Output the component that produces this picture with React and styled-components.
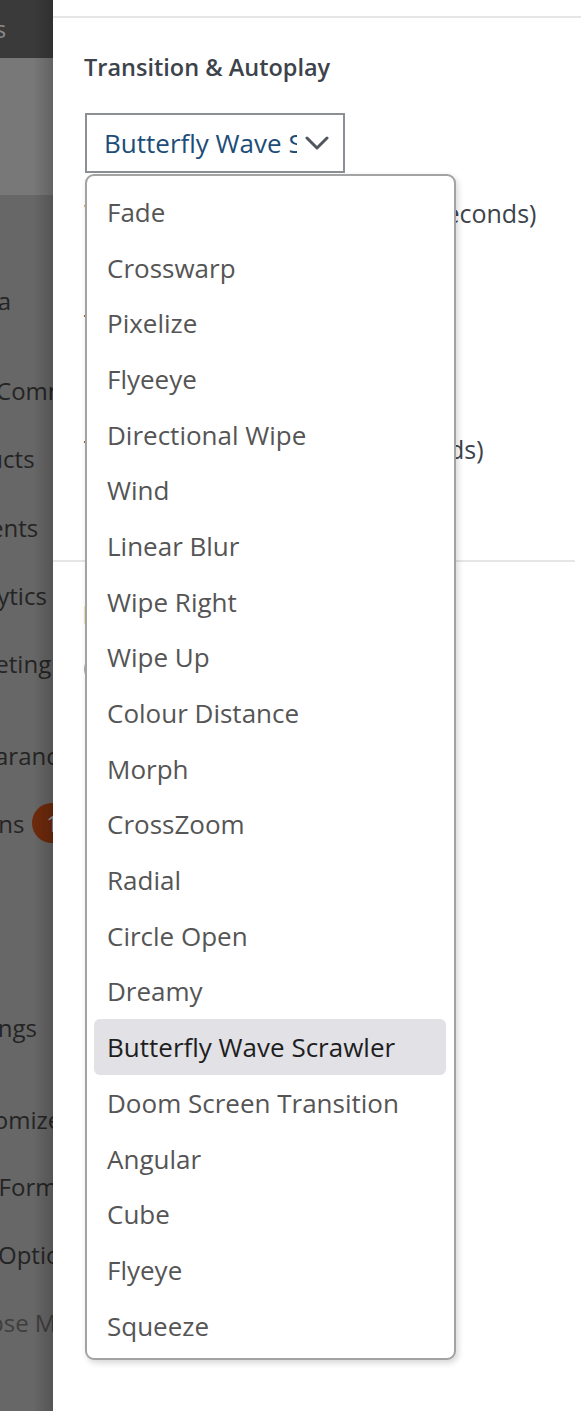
import React from 'react';
import styled, { createGlobalStyle } from 'styled-components';

const GlobalStyle = createGlobalStyle`
  html, body {
    margin: 0;
    padding: 0;
    background: #fff;
  }
  body {
    font-family: "Open Sans", "Noto Sans", sans-serif;
  }
`;

const Screen = styled.div`
  display: flex;
  width: 581px;
  height: 1411px;
  overflow: hidden;
`;

// dimmed admin menu on the left
const Sidebar = styled.aside`
  position: relative;
  flex: 0 0 53px;
  display: flex;
  flex-direction: column;
  background: #676767;
  overflow: hidden;
  &::after {
    content: '';
    position: absolute;
    top: 0;
    right: 0;
    bottom: 0;
    width: 20px;
    background: linear-gradient(to right, rgba(0, 0, 0, 0), rgba(0, 0, 0, 0.18));
  }
`;

const TopBar = styled.div`
  height: 58px;
  background: #3a3a3a;
  color: #8a8a8a;
  font-size: 24px;
  line-height: 58px;
  white-space: nowrap;
  margin-left: -${(p) => p.$shift}px;
`;

const CurrentBlock = styled.div`
  height: 137px;
  background: #787878;
`;

const MenuList = styled.nav`
  display: flex;
  flex-direction: column;
`;

const MenuItem = styled.div`
  display: flex;
  align-items: center;
  gap: 8px;
  height: 40px;
  margin-top: ${(p) => p.$top}px;
  margin-left: -${(p) => p.$shift}px;
  font-size: 24px;
  color: ${(p) => (p.$muted ? '#3e3e3e' : '#242424')};
  white-space: nowrap;
`;

const Badge = styled.span`
  display: inline-flex;
  align-items: center;
  justify-content: center;
  flex: 0 0 40px;
  height: 40px;
  border-radius: 50%;
  background: #6e2a0c;
  color: #9a9a9a;
  font-size: 22px;
`;

const Panel = styled.main`
  flex: 1;
  display: flex;
  flex-direction: column;
  background: #fff;
`;

const PanelHeader = styled.div`
  height: 16px;
  border-bottom: 2px solid #e6e6e6;
`;

const Section = styled.section`
  padding: 35px 0 0 31px;
  display: flex;
  flex-direction: column;
`;

const Heading = styled.h2`
  margin: 0;
  font-size: 23.5px;
  font-weight: 600;
  line-height: 29px;
  color: #3c434a;
`;

const SelectWrap = styled.div`
  position: relative;
  margin: 31px 0 0 1px;
  width: 260px;
`;

const SelectBox = styled.div`
  box-sizing: border-box;
  display: flex;
  align-items: center;
  width: 260px;
  height: 60px;
  border: 2px solid #8c8f94;
  padding: 0 14px 0 17px;
  background: #fff;
`;

const SelectValue = styled.span`
  flex: 1;
  overflow: hidden;
  white-space: nowrap;
  font-size: 26px;
  color: #1c4d78;
`;

const Chevron = styled.svg`
  flex: 0 0 auto;
  margin-left: 8px;
`;

const Field = styled.div`
  margin-top: ${(p) => p.$top}px;
  font-size: 25px;
  line-height: 30px;
  color: #3c434a;
  white-space: nowrap;
`;

const Divider = styled.hr`
  margin: ${(p) => p.$top}px 6px 0 -31px;
  border: 0;
  border-top: 2px solid #e6e6e6;
`;

const Notice = styled.div`
  margin-top: 44px;
  width: 4px;
  height: 18px;
  background: #f0e9a8;
`;

const Toggle = styled.div`
  margin-top: 30px;
  width: 40px;
  height: 30px;
  border-radius: 15px;
  background: #a7aaad;
`;

const Dropdown = styled.ul`
  position: absolute;
  top: 61px;
  left: 0;
  z-index: 5;
  box-sizing: border-box;
  width: 371px;
  margin: 0;
  padding: 8px 8px 5px 7px;
  list-style: none;
  background: #fff;
  border: 2px solid #a3a3a3;
  border-radius: 9px;
  box-shadow: 2px 3px 6px rgba(0, 0, 0, 0.16);
`;

const Option = styled.li`
  height: 55.7px;
  display: flex;
  align-items: center;
  padding-left: 13px;
  border-radius: 6px;
  font-size: 26px;
  white-space: nowrap;
  color: ${(p) => (p.$selected ? '#1e1e1e' : '#555')};
  background: ${(p) => (p.$selected ? '#e1e1e6' : 'transparent')};
`;

const menu = [
  { label: 'Media', top: 85, shift: 58 },
  { label: 'WooCommerce', top: 50, shift: 55 },
  { label: 'Products', top: 28, shift: 65 },
  { label: 'Payments', top: 29, shift: 72 },
  { label: 'Analytics', top: 28, shift: 52 },
  { label: 'Marketing', top: 28, shift: 62 },
  { label: 'Appearance', top: 52, shift: 63 },
  { label: 'Plugins', top: 28, shift: 56, badge: '1' },
  { label: '', top: 28, shift: 0 },
  { label: '', top: 28, shift: 0 },
  { label: 'Settings', top: 28, shift: 52 },
  { label: 'Customize', top: 52, shift: 56 },
  { label: 'WPForms', top: 27, shift: 38 },
  { label: 'Options', top: 28, shift: 2 },
  { label: 'Collapse Menu', top: 28, shift: 66, muted: true },
];

const transitions = [
  'Fade',
  'Crosswarp',
  'Pixelize',
  'Flyeeye',
  'Directional Wipe',
  'Wind',
  'Linear Blur',
  'Wipe Right',
  'Wipe Up',
  'Colour Distance',
  'Morph',
  'CrossZoom',
  'Radial',
  'Circle Open',
  'Dreamy',
  'Butterfly Wave Scrawler',
  'Doom Screen Transition',
  'Angular',
  'Cube',
  'Flyeye',
  'Squeeze',
];

const selected = 'Butterfly Wave Scrawler';

export default function App() {
  return (
    <>
      <GlobalStyle />
      <Screen>
        <Sidebar>
          <TopBar $shift={54}>Posts</TopBar>
          <CurrentBlock />
          <MenuList>
            {menu.map((item, i) => (
              <MenuItem
                key={`menu-${i}`}
                $top={item.top}
                $shift={item.shift}
                $muted={item.muted}
              >
                {item.label}
                {item.badge && <Badge>{item.badge}</Badge>}
              </MenuItem>
            ))}
          </MenuList>
        </Sidebar>
        <Panel>
          <PanelHeader />
          <Section>
            <Heading>Transition &amp; Autoplay</Heading>
            <SelectWrap>
              <SelectBox>
                <SelectValue>{selected}</SelectValue>
                <Chevron width="24" height="14" viewBox="0 0 24 14">
                  <path
                    d="M2 2l10 10L22 2"
                    fill="none"
                    stroke="#50575e"
                    strokeWidth="3"
                    strokeLinecap="round"
                    strokeLinejoin="round"
                  />
                </Chevron>
              </SelectBox>
              <Dropdown>
                {transitions.map((t) => (
                  <Option key={t} $selected={t === selected}>
                    {t}
                  </Option>
                ))}
              </Dropdown>
            </SelectWrap>
            <Field $top={25}>Wait time between the slides (seconds)</Field>
            <Field $top={80}>Transition effect</Field>
            <Field $top={96}>Transition duration time (seconds)</Field>
            <Divider $top={96} />
            <Notice />
            <Toggle />
          </Section>
        </Panel>
      </Screen>
    </>
  );
}
